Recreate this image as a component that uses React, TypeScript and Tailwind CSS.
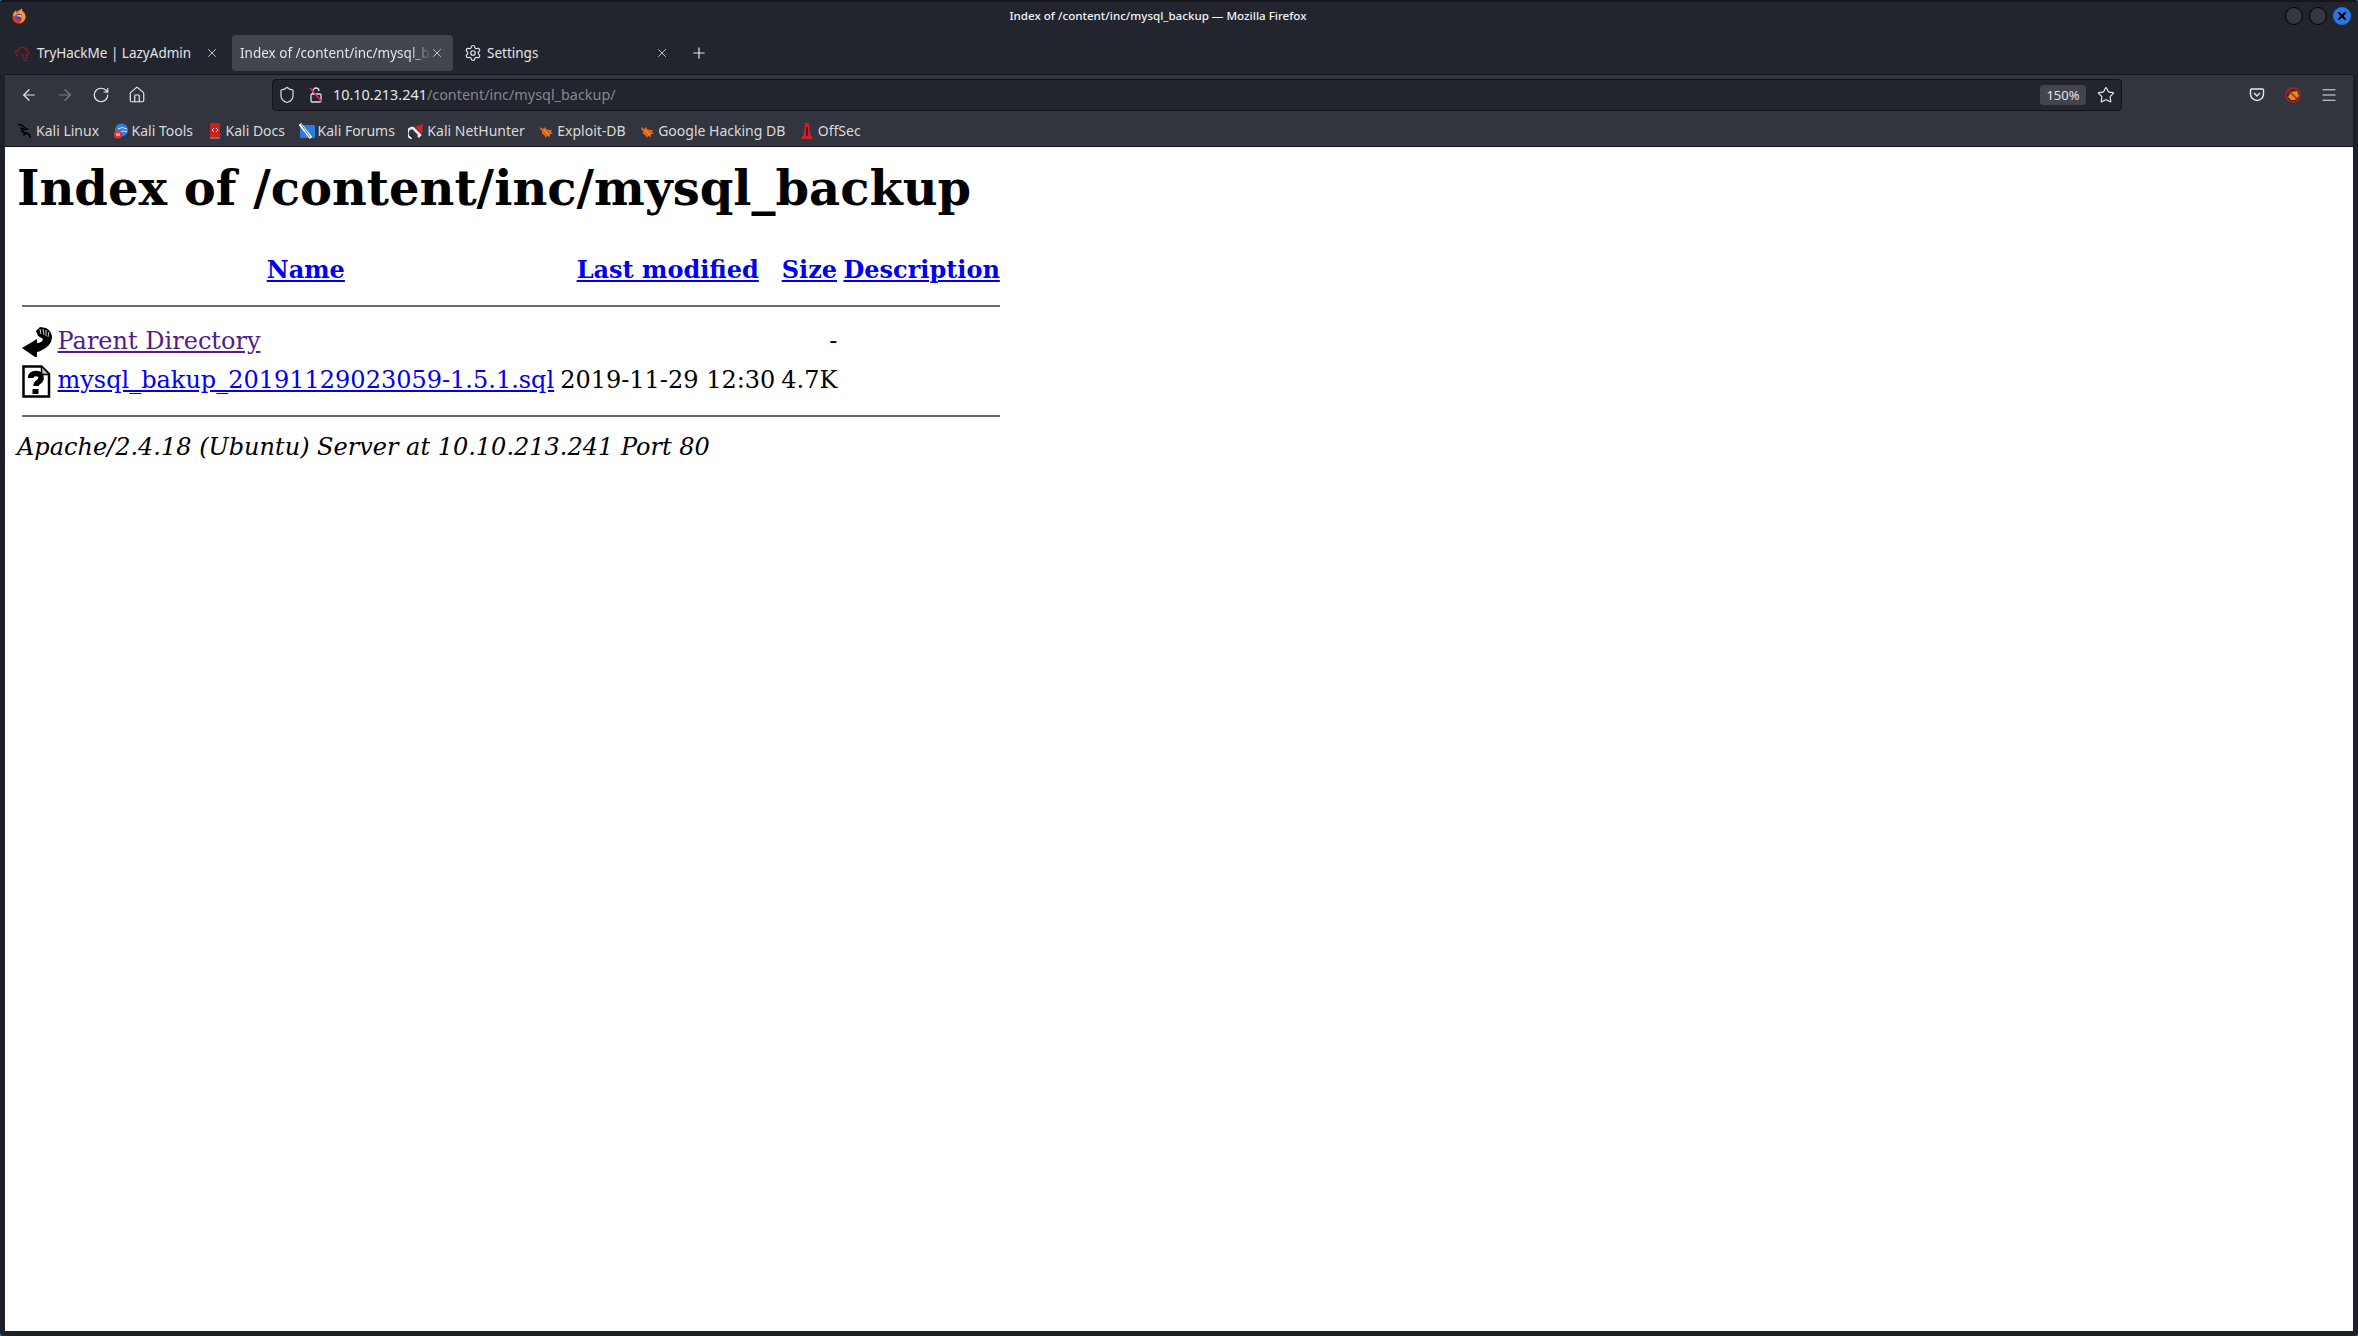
import type { ReactNode } from 'react';
import { ArrowLeft, ArrowRight, RotateCw, Home, Settings, X, Plus, Star, Shield, Menu } from 'lucide-react';

const uiFont = "font-['Noto_Sans',sans-serif]";

function FirefoxLogo() {
  return (
    <svg viewBox="0 0 16 16" className="w-[16px] h-[16px]">
      <circle cx="8" cy="9" r="6.6" fill="#e5352f" />
      <path d="M2 8Q2 4 5 2.500 4.500 4.500 6 5 8 1.500 11 .500 10.500 3 12.500 4 15 6 14.600 9.500 13 14 8 15.500 12 12 11 8 9.500 5.500 6.500 6.500 4 7.500 2 8Z" fill="#fb9a1f" />
      <circle cx="8" cy="9" r="3.200" fill="#3f4fc4" />
      <path d="M5 8Q7 6.500 10 7 12 9 10.500 11.500 11 8.500 8 8.500Z" fill="#f7c72e" />
    </svg>
  );
}

function Tab({ icon, title, active, padding, width, closeOffset }: { icon?: ReactNode; title: string; active?: boolean; padding: string; width: string; closeOffset: string }) {
  return (
    <div className={`h-[36px] flex items-center rounded-[4px] relative shrink-0 ${padding} ${width} ${active ? 'bg-[#42454e]' : ''}`}>
      <div className="flex items-center gap-[6px]">
        {icon}
        <span className={`text-[13.5px] text-[#e3e4e6] whitespace-nowrap ${active ? 'block w-[192px] overflow-hidden [mask-image:linear-gradient(to_right,black_88%,transparent)]' : ''}`}>{title}</span>
      </div>
      <X className={`absolute top-[11px] w-[14px] h-[14px] text-[#d6d7da] ${closeOffset}`} strokeWidth={1.5} />
    </div>
  );
}

function Bookmark({ icon, label }: { icon: ReactNode; label: string }) {
  return (
    <div className="flex items-center gap-[3px]">
      <span className="w-[16px] h-[16px] flex items-center justify-center">{icon}</span>
      <span className="text-[14px] text-[#d9dadc] whitespace-nowrap">{label}</span>
    </div>
  );
}

function BugIcon() {
  return (
    <svg viewBox="0 0 16 16" className="w-[16px] h-[16px]">
      <path d="M2 4l3 2 2-2 1 2 3 1 3 0-1 2 2 2-3 0 0 3-3-1-1 2-2-3-2-1 0-3-2-2z" fill="#de6420" />
      <path d="M6 7l5 5" stroke="#f0a050" strokeWidth="1" />
    </svg>
  );
}

function BackIcon() {
  return (
    <svg viewBox="0 0 30 33" className="w-[30px] h-[33px]">
      <path d="M14 5L18 1 24 2Q30 5 30 12 29 20 20 24 17 26 15 26L15 31 13 31 0 22 15 13 15 17Q20 17 21 13 18 11 16 10Z" fill="#000" />
      <path d="M18 3l1 5M21 3l1 6M24 4l0 6M27 6l-1 5" stroke="#fff" strokeWidth="0.8" />
    </svg>
  );
}

function UnknownIcon() {
  return (
    <svg viewBox="0 0 30 33" className="w-[30px] h-[33px]">
      <path d="M1.500 1.500h18l7.500 7.500v22.500h-25.500z" fill="#fff" stroke="#000" strokeWidth="2.500" />
      <path d="M19.500 2v7.500h7" fill="#bbb" stroke="#000" strokeWidth="1.500" />
      <path d="M8.500 13q0-4.500 5.500-4.500t5 4.500q0 2.500-2.500 4t-2.500 4" fill="none" stroke="#000" strokeWidth="5.500" />
      <rect x="10.500" y="24" width="6" height="5" fill="#000" />
    </svg>
  );
}

export default function App() {
  return (
    <div className="w-[2358px] h-[1336px] bg-[#2d6f9c] overflow-hidden">
      <div className="w-full h-full rounded-[4px] bg-[#1d2029] flex flex-col pl-[5px] pr-[5px] pb-[5px] overflow-hidden">
        <div className="h-[74px] bg-[#22252e] flex flex-col shrink-0 -ml-[5px] -mr-[5px] pl-[4px] pr-[5px] border-t-2 border-[#15171c]">
          <div className={`h-[28px] flex items-center shrink-0 ${uiFont}`}>
            <div className="pl-[7px]"><FirefoxLogo /></div>
            <span className="flex-1 text-center text-[11.6px] font-medium text-[#f1f2f3] pl-[4px]">Index of /content/inc/mysql_backup — Mozilla Firefox</span>
            <div className="flex items-center gap-[6px] pr-[2px]">
              <span className="w-[18px] h-[18px] rounded-full bg-[#343843] border border-black" />
              <span className="w-[18px] h-[18px] rounded-full bg-[#343843] border border-black" />
              <span className="w-[18px] h-[18px] rounded-full bg-[#2a74e6] flex items-center justify-center"><X className="w-[12px] h-[12px] text-black" strokeWidth={4} /></span>
            </div>
          </div>
          <div className={`flex items-center ${uiFont} pl-[4px] pt-[5px]`}>
            <Tab
              title="TryHackMe | LazyAdmin"
              padding="pl-[7px]"
              width="w-[224px]"
              closeOffset="left-[197px]"
              icon={
                <svg viewBox="0 0 16 16" className="w-[16px] h-[16px]" fill="none" stroke="#a31621" strokeWidth="1.1">
                  <path d="M4 11a3 3 0 0 1-.500-6 4.200 4.200 0 0 1 8 0.500 2.500 2.500 0 0 1 2 3.500" />
                  <path d="M6 10h3M10 10h4M7 12.500h2M10 12.500h3M8 15h4" />
                </svg>
              }
            />
            <Tab title="Index of /content/inc/mysql_backup" active padding="pl-[8px]" width="w-[221px]" closeOffset="left-[198px]" />
            <Tab
              title="Settings"
              padding="pl-[11px]"
              width="w-[223px]"
              closeOffset="left-[202px]"
              icon={<Settings className="w-[18px] h-[18px] text-[#e3e4e6] -mr-[1px]" strokeWidth={1.6} />}
            />
            <Plus className="w-[18px] h-[18px] text-[#e3e4e6] ml-[14px] shrink-0" strokeWidth={1.6} />
          </div>
        </div>

        <div className={`h-[37px] bg-[#32353d] border-t border-[#15171c] pt-[4px] flex items-center shrink-0 ${uiFont}`}>
          <div className="flex items-center gap-[18px] pl-[15px] w-[267px]">
            <ArrowLeft className="w-[18px] h-[18px] text-[#e6e7e9]" strokeWidth={1.6} />
            <ArrowRight className="w-[18px] h-[18px] text-[#7d7f85]" strokeWidth={1.6} />
            <RotateCw className="w-[18px] h-[18px] text-[#e6e7e9]" strokeWidth={1.6} />
            <Home className="w-[18px] h-[18px] text-[#e6e7e9]" strokeWidth={1.6} />
          </div>
          <div className="w-[1850px] h-[32px] bg-[#22252e] border border-[#121318] rounded-[4px] flex items-center relative">
            <Shield className="w-[18px] h-[18px] text-[#dfe0e2] ml-[5px]" strokeWidth={1.6} />
            <span className="ml-[12px] w-[16px] h-[16px] flex items-center justify-center">
              <svg viewBox="0 0 16 16" className="w-[16px] h-[16px]" fill="none">
                <rect x="3" y="7" width="10" height="8" rx="1" stroke="#dfe0e2" strokeWidth="1.300" />
                <path d="M5 7V4a3 3 0 0 1 6 0" stroke="#dfe0e2" strokeWidth="1.300" />
                <path d="M2 1l12 14" stroke="#e22850" strokeWidth="1.500" />
              </svg>
            </span>
            <span className="ml-[9px] text-[14.4px] text-[#e6e7e9] whitespace-nowrap">10.10.213.241<span className="text-[#85878c]">/content/inc/mysql_backup/</span></span>
            <span className="ml-auto mr-[35px] w-[46px] h-[20px] rounded-[3px] bg-[#42454e] text-[13px] text-center leading-[20px] text-[#e3e4e6]">150%</span>
            <Star className="absolute right-[6px] top-[6px] w-[18px] h-[18px] text-[#e6e7e9]" strokeWidth={1.6} />
          </div>
          <div className="flex items-center ml-auto pr-[15px] gap-[20px]">
            <svg viewBox="0 0 16 16" className="w-[16px] h-[16px]" fill="none" stroke="#e6e7e9" strokeWidth="1.400">
              <path d="M2.500 2h11a1 1 0 0 1 1 1v4a6.500 6.500 0 0 1-13 0V3a1 1 0 0 1 1-1z" />
              <path d="M5 6l3 3 3-3" />
            </svg>
            <svg viewBox="0 0 16 16" className="w-[16px] h-[16px]">
              <circle cx="8" cy="8" r="7" fill="#3a2a2a" stroke="#c21a1a" strokeWidth="1.400" />
              <path d="M3 10l3-5 6-1 2 5-4 4-4 0z" fill="#e08a1e" />
              <path d="M3 3l10 10" stroke="#c21a1a" strokeWidth="1.400" />
            </svg>
            <Menu className="w-[18px] h-[18px] text-[#e6e7e9] -ml-[1px]" strokeWidth={1.6} />
          </div>
        </div>

        <div className={`h-[36px] bg-[#32353d] border-b border-[#121318] pt-[4px] flex items-center gap-[13.5px] pl-[12px] shrink-0 ${uiFont}`}>
          <Bookmark
            label="Kali Linux"
            icon={<svg viewBox="0 0 16 16" className="w-[16px] h-[16px]" fill="none" stroke="#000" strokeWidth="1.500"><path d="M1 2c2-1 5 0 6 2l3 2-5 1c-1 2 3 3 5 3 2 1 3 3 3 5" /><path d="M3 5l4 1M9 11l-3 1" /></svg>}
          />
          <Bookmark
            label="Kali Tools"
            icon={
              <svg viewBox="0 0 16 16" className="w-[16px] h-[16px]">
                <circle cx="8.500" cy="7" r="6.500" fill="#2f7fe0" />
                <path d="M5 6q4-3 9 0M7 9q3-2 7 0" stroke="#d5e5fb" fill="none" />
                <circle cx="5" cy="11.500" r="4" fill="#e0362c" />
                <path d="M4 10v3M6 10v3" stroke="#fff" />
              </svg>
            }
          />
          <Bookmark
            label="Kali Docs"
            icon={
              <svg viewBox="0 0 16 16" className="w-[16px] h-[16px]">
                <rect x="3" y="0" width="10" height="14" fill="#cf1f1f" />
                <rect x="3" y="14" width="10" height="2" fill="#8c6a6a" />
                <path d="M7 5L5 7l2 2M9 5l2 2-2 2" stroke="#fff" strokeWidth="1" fill="none" />
              </svg>
            }
          />
          <Bookmark
            label="Kali Forums"
            icon={
              <svg viewBox="0 0 16 16" className="w-[16px] h-[16px]">
                <rect x="1" y="2" width="15" height="13" rx="1" fill="#2a7de1" />
                <path d="M1 1l11 14" stroke="#fff" strokeWidth="3" />
                <path d="M2 1l9 13" stroke="#333" strokeWidth=".7" />
              </svg>
            }
          />
          <Bookmark
            label="Kali NetHunter"
            icon={
              <svg viewBox="0 0 16 16" className="w-[16px] h-[16px]" fill="none">
                <path d="M7 4L15 1 14 11z" fill="#d8202c" />
                <path d="M4 15a5 5 0 0 1 1-10l7 7-2 2" stroke="#ececec" strokeWidth="2.500" />
                <path d="M2 12l3 3" stroke="#222" strokeWidth="1.500" />
              </svg>
            }
          />
          <Bookmark label="Exploit-DB" icon={<BugIcon />} />
          <Bookmark label="Google Hacking DB" icon={<BugIcon />} />
          <Bookmark
            label="OffSec"
            icon={<svg viewBox="0 0 16 16" className="w-[16px] h-[16px]"><path d="M6 0h4l1 10 3 6H2l3-6z" fill="#d01f2a" /><path d="M8 4v9" stroke="#3a0a0a" strokeWidth="1.500" /></svg>}
          />
        </div>

        <div className="flex-1 bg-white font-['DejaVu_Serif',serif] text-[24px] leading-[28px] text-black px-[12px] pt-[1px]">
          <h1 className="text-[48px] leading-[56px] font-bold mt-[12px] mb-[35px]">Index of /content/inc/mysql_backup</h1>
          <table className="border-separate border-spacing-[3px]">
            <tbody>
              <tr>
                <th className="p-[1.500px]" />
                <th className="p-[1.500px] text-center"><a href="#" className="text-[#0000ee] underline">Name</a></th>
                <th className="p-[1.500px] text-center"><a href="#" className="text-[#0000ee] underline">Last modified</a></th>
                <th className="p-[1.500px] text-center"><a href="#" className="text-[#0000ee] underline">Size</a></th>
                <th className="p-[1.500px] text-center"><a href="#" className="text-[#0000ee] underline">Description</a></th>
              </tr>
              <tr>
                <th colSpan={5} className="p-[1.500px]"><hr className="mt-[15px] mb-[13.500px] border-t-2 border-[#6b6b6b]" /></th>
              </tr>
              <tr>
                <td className="p-[1.500px]"><BackIcon /></td>
                <td className="px-[1.500px] pb-[3px]"><a href="#" className="text-[#551a8b] underline">Parent Directory</a></td>
                <td className="p-[1.500px]">&nbsp;</td>
                <td className="px-[1.500px] pb-[3px] text-right">- </td>
                <td className="p-[1.500px]">&nbsp;</td>
              </tr>
              <tr>
                <td className="p-[1.500px]"><UnknownIcon /></td>
                <td className="px-[1.500px] pb-[3px]"><a href="#" className="text-[#0000ee] underline">mysql_bakup_20191129023059-1.5.1.sql</a></td>
                <td className="px-[1.500px] pb-[3px] text-right whitespace-nowrap">2019-11-29 12:30</td>
                <td className="px-[1.500px] pb-[3px] text-right">4.7K</td>
                <td className="p-[1.500px]">&nbsp;</td>
              </tr>
              <tr>
                <th colSpan={5} className="p-[1.500px]"><hr className="mt-[11px] mb-[11.500px] border-t-2 border-[#6b6b6b]" /></th>
              </tr>
            </tbody>
          </table>
          <address className="italic">Apache/2.4.18 (Ubuntu) Server at 10.10.213.241 Port 80</address>
        </div>
      </div>
    </div>
  );
}
